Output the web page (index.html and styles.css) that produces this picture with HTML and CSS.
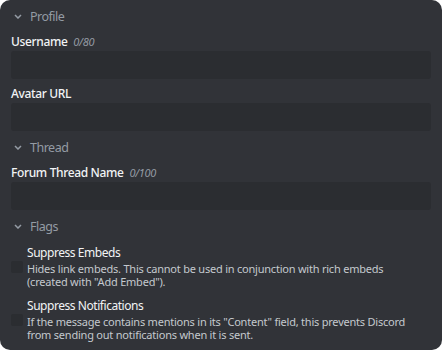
FILE: index.html
```html
<!DOCTYPE html>
<html>
<head>
<meta charset="utf-8">
<link rel="stylesheet" href="styles.css">
</head>
<body>
<div class="panel">
  <div class="section-head">
    <svg class="chev" width="8" height="5" viewBox="0 0 8 5"><path d="M1 1 L4 4 L7 1" fill="none" stroke="currentColor" stroke-width="1.5"/></svg>
    <span>Profile</span>
  </div>
  <div class="field">
    <div class="label">Username <span class="count">0/80</span></div>
    <div class="input"></div>
  </div>
  <div class="field">
    <div class="label">Avatar URL</div>
    <div class="input"></div>
  </div>
  <div class="section-head">
    <svg class="chev" width="8" height="5" viewBox="0 0 8 5"><path d="M1 1 L4 4 L7 1" fill="none" stroke="currentColor" stroke-width="1.5"/></svg>
    <span>Thread</span>
  </div>
  <div class="field">
    <div class="label">Forum Thread Name <span class="count">0/100</span></div>
    <div class="input"></div>
  </div>
  <div class="section-head flags-head">
    <svg class="chev" width="8" height="5" viewBox="0 0 8 5"><path d="M1 1 L4 4 L7 1" fill="none" stroke="currentColor" stroke-width="1.5"/></svg>
    <span>Flags</span>
  </div>
  <div class="flag">
    <div class="box"></div>
    <div class="flag-text">
      <div class="flag-title">Suppress Embeds</div>
      <div class="flag-desc">Hides link embeds. This cannot be used in conjunction with rich embeds (created with "Add Embed").</div>
    </div>
  </div>
  <div class="flag flag2">
    <div class="box"></div>
    <div class="flag-text">
      <div class="flag-title">Suppress Notifications</div>
      <div class="flag-desc">If the message contains mentions in its "Content" field, this prevents Discord from sending out notifications when it is sent.</div>
    </div>
  </div>
</div>
</body>
</html>
```

FILE: styles.css
```css
html, body {
  margin: 0;
  padding: 0;
  background: #ffffff;
}
.panel {
  width: 442px;
  height: 350px;
  box-sizing: border-box;
  background: #313338;
  border-radius: 10px;
  padding: 5px 11px 0 11px;
  font-family: "Noto Sans", "Open Sans", sans-serif;
  overflow: hidden;
}
.section-head {
  display: flex;
  align-items: center;
  height: 22px;
  color: #949ba4;
  font-size: 12.5px;
  letter-spacing: -0.5px;
  margin-bottom: 5px;
}
.chev {
  margin-left: 3px;
  margin-right: 8px;
  color: #949ba4;
}
.field {
  margin-bottom: 5px;
}
.field + .field {
  margin-top: 1px;
}
.label {
  height: 19px;
  line-height: 19px;
  color: #f2f3f5;
  font-size: 12px;
  font-weight: 500;
  letter-spacing: -0.35px;
}
.count {
  font-style: italic;
  font-weight: 400;
  font-size: 11px;
  letter-spacing: -0.3px;
  color: #949ba4;
  margin-left: 3px;
}
.input {
  height: 28px;
  background: #2b2d31;
  border-radius: 3px;
}
.flags-head {
  margin-bottom: 8px;
}
.flag {
  display: flex;
  align-items: center;
}
.flag2 {
  margin-top: 10px;
}
.box {
  width: 12px;
  height: 12px;
  flex: none;
  background: #2b2d31;
  border-radius: 2px;
  margin-right: 4px;
}
.flag-text {
  max-width: 395px;
}
.flag-title {
  color: #f2f3f5;
  font-size: 12px;
  letter-spacing: -0.45px;
  line-height: 15px;
}
.flag-desc {
  color: #c4c9ce;
  font-size: 11px;
  letter-spacing: -0.22px;
  line-height: 13px;
  padding-top: 2px;
}
```
